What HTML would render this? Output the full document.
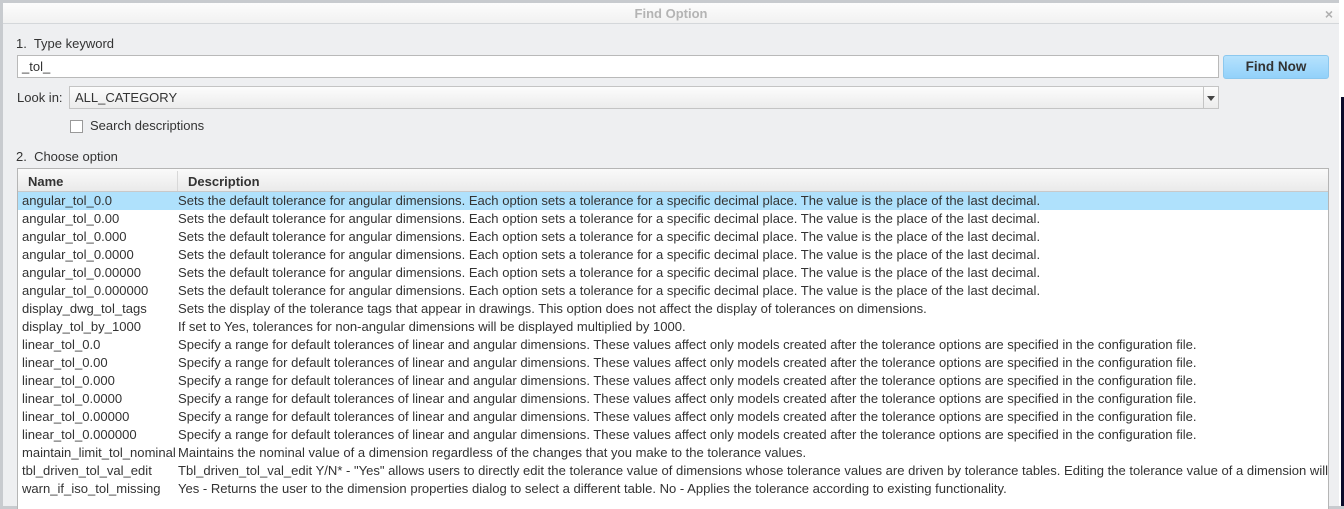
<!DOCTYPE html>
<html><head><style>
*{margin:0;padding:0;box-sizing:border-box}
body{width:1344px;height:506px;overflow:hidden;background:#c8cbcf;font-family:"Liberation Sans",Arial,sans-serif;font-size:13px;color:#333;position:relative}
#outside{position:absolute;left:1339px;top:0;width:5px;height:506px;background:#fff}
#outside2{position:absolute;left:1341px;top:97px;width:3px;height:409px;background:#0a0a2a}
#dlg{position:absolute;left:3px;top:3px;width:1336px;height:503px;background:#eeeff1}
#title{position:absolute;left:0;top:0;width:1336px;height:21px;background:linear-gradient(#fdfdfd,#f1f1f1);border-bottom:1px solid #d4d7da;text-align:center;line-height:22px;color:#b4b4b4;font-weight:bold;font-size:13px}
#x{position:absolute;right:6px;top:0;color:#b0b0b0;font-weight:bold;font-size:14px}
.lbl{position:absolute;font-size:13px}
#kw{position:absolute;left:14px;top:52px;width:1202px;height:23px;background:#fff;border:1px solid #b9b9b9;padding-left:4px;line-height:21px;font-size:13px}
#btn{position:absolute;left:1220px;top:52px;width:106px;height:24px;border:1px solid #8cc8ee;border-radius:3px;background:linear-gradient(#b6e2fd,#92d1fa);text-align:center;line-height:22px;font-weight:bold;font-size:13.5px;color:#333}
#sel{position:absolute;left:66px;top:83px;width:1150px;height:23px;border:1px solid #c4c4c4;background:linear-gradient(#fcfcfc,#ececec);line-height:21px;padding-left:5px;font-size:13px}
#arr{position:absolute;right:0;top:0;width:15px;height:21px;border-left:1px solid #c4c4c4}
#arr:after{content:"";position:absolute;left:3px;top:9px;border-left:4px solid transparent;border-right:4px solid transparent;border-top:5px solid #444}
#cb{position:absolute;left:67px;top:117px;width:13px;height:13px;background:#fff;border:1px solid #999}
#tbl{position:absolute;left:14px;top:165px;width:1312px;height:341px;background:#fff;border:1px solid #b5b5b5;border-bottom:none;overflow:hidden}
#hd{height:23px;background:linear-gradient(#fafafa,#eaeaea);border-bottom:1px solid #c9c9c9;position:relative;font-weight:bold;font-size:13px}
#hd span{position:absolute;top:5px}
#hd .sep{position:absolute;left:159px;top:2px;height:20px;border-left:1px solid #d8d8d8}
.r{height:18px;line-height:18px;white-space:nowrap;position:relative;font-size:13.05px}
.r span{position:absolute;left:4px}
.r span+span{left:160px}
.sel{background:#afe1fc}
</style></head><body>
<div id="outside"></div><div id="outside2"></div>
<div id="dlg">
<div id="title">Find Option<span id="x">×</span></div>
<div class="lbl" style="left:13px;top:33px">1.&nbsp; Type keyword</div>
<div id="kw">_tol_</div>
<div id="btn">Find Now</div>
<div class="lbl" style="left:14px;top:87px">Look in:</div>
<div id="sel">ALL_CATEGORY<div id="arr"></div></div>
<div id="cb"></div>
<div class="lbl" style="left:87px;top:115px">Search descriptions</div>
<div class="lbl" style="left:13px;top:146px">2.&nbsp; Choose option</div>
<div id="tbl">
<div id="hd"><span style="left:10px">Name</span><div class="sep"></div><span style="left:170px">Description</span></div>
<div class="r sel"><span>angular_tol_0.0</span><span>Sets the default tolerance for angular dimensions. Each option sets a tolerance for a specific decimal place. The value is the place of the last decimal.</span></div>
<div class="r"><span>angular_tol_0.00</span><span>Sets the default tolerance for angular dimensions. Each option sets a tolerance for a specific decimal place. The value is the place of the last decimal.</span></div>
<div class="r"><span>angular_tol_0.000</span><span>Sets the default tolerance for angular dimensions. Each option sets a tolerance for a specific decimal place. The value is the place of the last decimal.</span></div>
<div class="r"><span>angular_tol_0.0000</span><span>Sets the default tolerance for angular dimensions. Each option sets a tolerance for a specific decimal place. The value is the place of the last decimal.</span></div>
<div class="r"><span>angular_tol_0.00000</span><span>Sets the default tolerance for angular dimensions. Each option sets a tolerance for a specific decimal place. The value is the place of the last decimal.</span></div>
<div class="r"><span>angular_tol_0.000000</span><span>Sets the default tolerance for angular dimensions. Each option sets a tolerance for a specific decimal place. The value is the place of the last decimal.</span></div>
<div class="r"><span>display_dwg_tol_tags</span><span>Sets the display of the tolerance tags that appear in drawings. This option does not affect the display of tolerances on dimensions.</span></div>
<div class="r"><span>display_tol_by_1000</span><span>If set to Yes, tolerances for non-angular dimensions will be displayed multiplied by 1000.</span></div>
<div class="r"><span>linear_tol_0.0</span><span>Specify a range for default tolerances of linear and angular dimensions. These values affect only models created after the tolerance options are specified in the configuration file.</span></div>
<div class="r"><span>linear_tol_0.00</span><span>Specify a range for default tolerances of linear and angular dimensions. These values affect only models created after the tolerance options are specified in the configuration file.</span></div>
<div class="r"><span>linear_tol_0.000</span><span>Specify a range for default tolerances of linear and angular dimensions. These values affect only models created after the tolerance options are specified in the configuration file.</span></div>
<div class="r"><span>linear_tol_0.0000</span><span>Specify a range for default tolerances of linear and angular dimensions. These values affect only models created after the tolerance options are specified in the configuration file.</span></div>
<div class="r"><span>linear_tol_0.00000</span><span>Specify a range for default tolerances of linear and angular dimensions. These values affect only models created after the tolerance options are specified in the configuration file.</span></div>
<div class="r"><span>linear_tol_0.000000</span><span>Specify a range for default tolerances of linear and angular dimensions. These values affect only models created after the tolerance options are specified in the configuration file.</span></div>
<div class="r"><span>maintain_limit_tol_nominal</span><span>Maintains the nominal value of a dimension regardless of the changes that you make to the tolerance values.</span></div>
<div class="r"><span>tbl_driven_tol_val_edit</span><span>Tbl_driven_tol_val_edit Y/N* - "Yes" allows users to directly edit the tolerance value of dimensions whose tolerance values are driven by tolerance tables. Editing the tolerance value of a dimension will remove it from the table.</span></div>
<div class="r"><span>warn_if_iso_tol_missing</span><span>Yes - Returns the user to the dimension properties dialog to select a different table. No - Applies the tolerance according to existing functionality.</span></div>
</div>
</div>
</body></html>
